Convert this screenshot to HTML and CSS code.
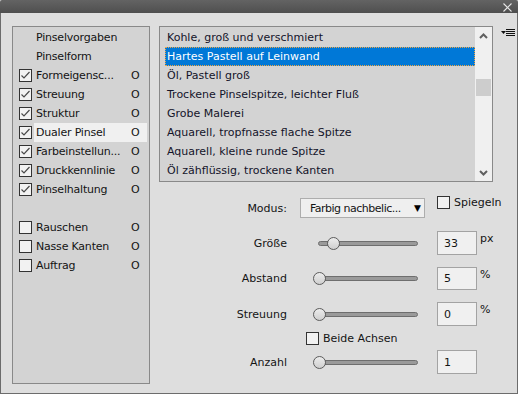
FILE: index.html
```html
<!DOCTYPE html>
<html lang="de">
<head>
<meta charset="utf-8">
<title>Pinsel</title>
<link rel="stylesheet" href="styles.css">
</head>
<body>
<div class="dialog">
  <div class="titlebar">
    <svg class="close" width="9" height="9" viewBox="0 0 9 9"><path d="M0.5 0.5 L8.5 8.5 M8.5 0.5 L0.5 8.5" stroke="#e6e6e6" stroke-width="1.1" fill="none"/></svg>
  </div>
  <div class="body">
    <div class="left">
      <div class="lrow"><span class="cbslot"></span><span class="lbl"><span class="ltxt">Pinselvorgaben</span></span></div>
      <div class="lrow"><span class="cbslot"></span><span class="lbl"><span class="ltxt">Pinselform</span></span></div>
      <div class="lrow"><span class="cb checked"><svg width="11" height="11" viewBox="0 0 11 11"><path d="M1.5 5.5 L4 8 L9.5 2" stroke="#4a4a4a" stroke-width="1.2" fill="none"/></svg></span><span class="lbl"><span class="ltxt">Formeigensc...</span><span class="lock">O</span></span></div>
      <div class="lrow"><span class="cb checked"><svg width="11" height="11" viewBox="0 0 11 11"><path d="M1.5 5.5 L4 8 L9.5 2" stroke="#4a4a4a" stroke-width="1.2" fill="none"/></svg></span><span class="lbl"><span class="ltxt">Streuung</span><span class="lock">O</span></span></div>
      <div class="lrow"><span class="cb checked"><svg width="11" height="11" viewBox="0 0 11 11"><path d="M1.5 5.5 L4 8 L9.5 2" stroke="#4a4a4a" stroke-width="1.2" fill="none"/></svg></span><span class="lbl"><span class="ltxt">Struktur</span><span class="lock">O</span></span></div>
      <div class="lrow"><span class="cb checked"><svg width="11" height="11" viewBox="0 0 11 11"><path d="M1.5 5.5 L4 8 L9.5 2" stroke="#4a4a4a" stroke-width="1.2" fill="none"/></svg></span><span class="lbl hl"><span class="ltxt">Dualer Pinsel</span><span class="lock">O</span></span></div>
      <div class="lrow"><span class="cb checked"><svg width="11" height="11" viewBox="0 0 11 11"><path d="M1.5 5.5 L4 8 L9.5 2" stroke="#4a4a4a" stroke-width="1.2" fill="none"/></svg></span><span class="lbl"><span class="ltxt">Farbeinstellun...</span><span class="lock">O</span></span></div>
      <div class="lrow"><span class="cb checked"><svg width="11" height="11" viewBox="0 0 11 11"><path d="M1.5 5.5 L4 8 L9.5 2" stroke="#4a4a4a" stroke-width="1.2" fill="none"/></svg></span><span class="lbl"><span class="ltxt">Druckkennlinie</span><span class="lock">O</span></span></div>
      <div class="lrow"><span class="cb checked"><svg width="11" height="11" viewBox="0 0 11 11"><path d="M1.5 5.5 L4 8 L9.5 2" stroke="#4a4a4a" stroke-width="1.2" fill="none"/></svg></span><span class="lbl"><span class="ltxt">Pinselhaltung</span><span class="lock">O</span></span></div>
      <div class="lrow spacer"></div>
      <div class="lrow"><span class="cb"></span><span class="lbl"><span class="ltxt">Rauschen</span><span class="lock">O</span></span></div>
      <div class="lrow"><span class="cb"></span><span class="lbl"><span class="ltxt">Nasse Kanten</span><span class="lock">O</span></span></div>
      <div class="lrow"><span class="cb"></span><span class="lbl"><span class="ltxt">Auftrag</span><span class="lock">O</span></span></div>
    </div>

    <div class="right">
      <div class="list">
        <div class="items">
          <div class="item">Kohle, groß und verschmiert</div>
          <div class="item sel">Hartes Pastell auf Leinwand</div>
          <div class="item">Öl, Pastell groß</div>
          <div class="item">Trockene Pinselspitze, leichter Fluß</div>
          <div class="item">Grobe Malerei</div>
          <div class="item">Aquarell, tropfnasse flache Spitze</div>
          <div class="item">Aquarell, kleine runde Spitze</div>
          <div class="item">Öl zähflüssig, trockene Kanten</div>
        </div>
        <div class="scrollbar">
          <div class="arrow"><svg width="9" height="6" viewBox="0 0 9 6"><path d="M1 5 L4.5 1.5 L8 5" stroke="#606060" stroke-width="2" fill="none"/></svg></div>
          <div class="track"><div class="sthumb"></div></div>
          <div class="arrow"><svg width="9" height="6" viewBox="0 0 9 6"><path d="M1 1 L4.5 4.5 L8 1" stroke="#606060" stroke-width="2" fill="none"/></svg></div>
        </div>
      </div>

      <div class="controls">
        <div class="crow modus">
          <span class="clabel">Modus:</span>
          <div class="dropdown"><span class="ddtxt">Farbig nachbelic...</span><span class="caret">▼</span></div>
          <div class="spiegeln"><span class="cb"></span><span class="cbtxt">Spiegeln</span></div>
        </div>
        <div class="crow srow groesse">
          <span class="clabel">Größe</span>
          <div class="slider"><div class="strack"></div><div class="knob" style="left:14px"></div></div>
          <div class="num">33</div><span class="unit">px</span>
        </div>
        <div class="crow srow abstand">
          <span class="clabel">Abstand</span>
          <div class="slider"><div class="strack"></div><div class="knob" style="left:0px"></div></div>
          <div class="num">5</div><span class="unit">%</span>
        </div>
        <div class="crow srow streuung">
          <span class="clabel">Streuung</span>
          <div class="slider"><div class="strack"></div><div class="knob" style="left:0px"></div></div>
          <div class="num">0</div><span class="unit">%</span>
        </div>
        <div class="crow achsen">
          <span class="cb"></span><span class="cbtxt">Beide Achsen</span>
        </div>
        <div class="crow srow anzahl">
          <span class="clabel">Anzahl</span>
          <div class="slider"><div class="strack"></div><div class="knob" style="left:0px"></div></div>
          <div class="num">1</div>
        </div>
      </div>
    </div>

    <div class="flyout">
      <svg width="14" height="8" viewBox="0 0 14 8"><path d="M0 2 L5 2 L2.5 5 Z" fill="#111"/><path d="M5 0.5 H14 M5 2.5 H14 M5 4.5 H14 M5 6.5 H14" stroke="#111" stroke-width="1"/></svg>
    </div>
  </div>
</div>
</body>
</html>
```

FILE: styles.css
```css
html, body {
  margin: 0;
  padding: 0;
}
body {
  font-family: "DejaVu Sans", Verdana, sans-serif;
  font-size: 11px;
  color: #141414;
  background: #dedede;
}
.dialog {
  width: 518px;
  height: 394px;
  display: flex;
  flex-direction: column;
}
.titlebar {
  height: 13px;
  background: linear-gradient(#636363, #4f4f4f);
  border-radius: 2px 2px 0 0;
  display: flex;
  justify-content: flex-end;
  align-items: center;
  padding-right: 6px;
  flex: none;
}
.close {
  display: block;
  margin-top: 1px;
}
.body {
  flex: 1;
  display: flex;
  align-items: flex-start;
  border: 1px solid #6c6c6c;
  border-top: none;
  background: #dedede;
  padding: 13px 0 0 11px;
  overflow: hidden;
}

/* left panel */
.left {
  width: 138px;
  height: 358px;
  box-sizing: border-box;
  border: 1px solid #898989;
  background: #d3d3d3;
  padding-top: 1px;
  flex: none;
}
.lrow {
  height: 19px;
  display: flex;
  align-items: center;
}
.cbslot {
  width: 13px;
  height: 13px;
  margin-left: 6px;
  flex: none;
}
.left .cb {
  margin-left: 6px;
}
.cb {
  width: 13px;
  height: 13px;
  box-sizing: border-box;
  border: 1px solid #333;
  background: #f2f2f2;
  display: flex;
  align-items: center;
  justify-content: center;
  flex: none;
}
.cb svg {
  display: block;
}
.lbl {
  flex: 1;
  min-width: 0;
  margin: 0 2px;
  height: 19px;
  line-height: 19px;
  padding: 0 7px 0 2px;
  display: flex;
  justify-content: space-between;
  white-space: nowrap;
}
.ltxt {
  letter-spacing: -0.2px;
}
.lbl.hl {
  background: #f0f0f0;
}
.lock {
  width: 9px;
  flex: none;
}

/* right column */
.right {
  margin-left: 9px;
  width: 334px;
  flex: none;
}
.list {
  height: 156px;
  box-sizing: border-box;
  border: 1px solid #898989;
  background: #d3d3d3;
  display: flex;
}
.items {
  flex: 1;
  min-width: 0;
  padding: 1px 0 0 5px;
  overflow: hidden;
}
.item {
  height: 19px;
  line-height: 19px;
  padding-left: 2px;
  white-space: nowrap;
  overflow: hidden;
  color: #14142a;
}
.item.sel {
  background: #0078d7;
  color: #fff;
  border: 1px dotted #f0a542;
  line-height: 17px;
  padding-left: 1px;
  box-sizing: border-box;
}
.scrollbar {
  width: 17px;
  background: #f0f0f0;
  display: flex;
  flex-direction: column;
  flex: none;
}
.arrow {
  height: 17px;
  display: flex;
  align-items: center;
  justify-content: center;
}
.arrow svg { display: block; }
.track {
  flex: 1;
  padding-top: 35px;
}
.sthumb {
  height: 17px;
  margin: 0 1px;
  background: #cdcdcd;
}

/* controls */
.controls {
  display: flex;
  flex-direction: column;
}
.crow {
  display: flex;
  align-items: center;
}
.clabel {
  width: 128px;
  text-align: right;
  flex: none;
}
.modus {
  margin-top: 16px;
  height: 20px;
}
.dropdown {
  margin-left: 13px;
  width: 125px;
  height: 20px;
  box-sizing: border-box;
  border: 1px solid #adadad;
  background: #efefef;
  display: flex;
  align-items: center;
  justify-content: space-between;
  padding: 0 3px 0 9px;
  white-space: nowrap;
  flex: none;
}
.ddtxt {
  letter-spacing: -0.5px;
}
.caret {
  font-size: 9px;
  color: #000;
}
.spiegeln {
  margin-left: 12px;
  display: flex;
  align-items: center;
  align-self: flex-start;
  margin-top: -2px;
  white-space: nowrap;
  flex: none;
}
.cbtxt {
  margin-left: 4px;
  white-space: nowrap;
}
.srow {
  height: 24px;
}
.groesse { margin-top: 13px; }
.abstand { margin-top: 12px; height: 23px; }
.streuung { margin-top: 12px; }
.slider {
  margin-left: 26px;
  width: 106px;
  height: 13px;
  position: relative;
  flex: none;
}
.strack {
  position: absolute;
  left: 5px;
  top: 4px;
  width: 100px;
  height: 5px;
  box-sizing: border-box;
  border: 1px solid #6e6e6e;
  border-radius: 3px;
  background: #9a9a9a;
}
.knob {
  position: absolute;
  top: 0;
  width: 13px;
  height: 13px;
  box-sizing: border-box;
  border: 1px solid #5c5c5c;
  border-radius: 50%;
  background: linear-gradient(#ececec, #cfcfcf);
}
.num {
  margin-left: 18px;
  width: 40px;
  height: 100%;
  box-sizing: border-box;
  border: 1px solid #a3a3a3;
  background: #f0f0f0;
  padding-left: 6px;
  display: flex;
  align-items: center;
  flex: none;
}
.unit {
  margin-left: 3px;
  align-self: flex-start;
  margin-top: 1px;
}
.achsen {
  margin-top: 4px;
  height: 16px;
  padding-left: 147px;
}
.anzahl {
  margin-top: 4px;
}

.flyout {
  margin-left: 8px;
  margin-top: 3px;
  flex: none;
}
.flyout svg { display: block; }
```
